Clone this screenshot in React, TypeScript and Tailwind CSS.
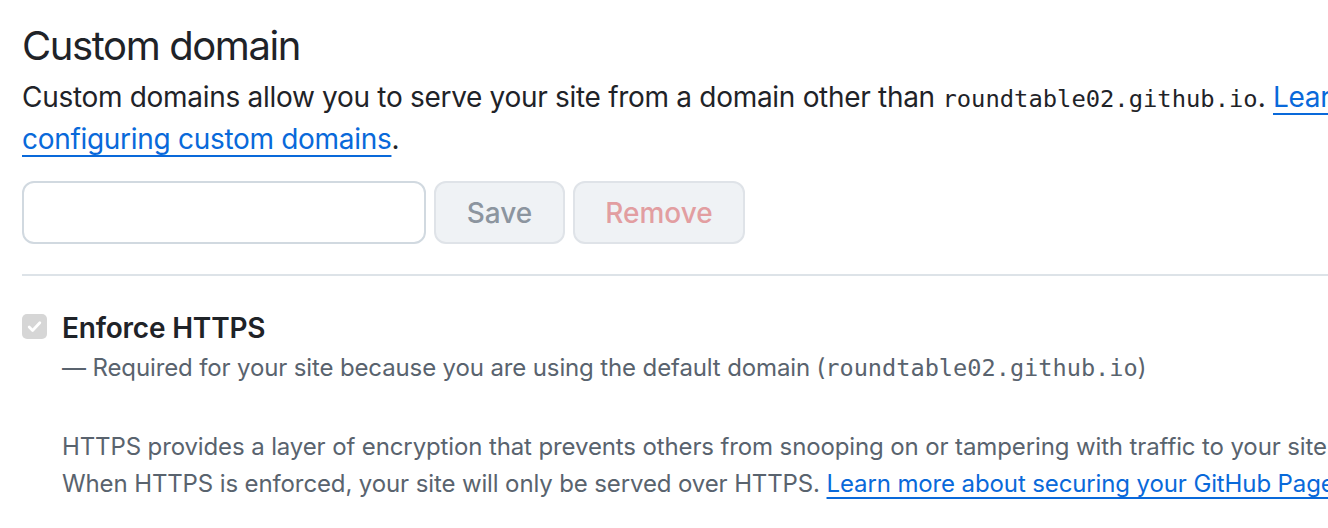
import React from "react";

const sans = { fontFamily: 'Inter, "Liberation Sans", Arial, sans-serif' } as const;

export default function App() {
  return (
    <div
      className="w-[1328px] h-[528px] overflow-hidden bg-white text-[#1f2328] font-['Inter','Liberation_Sans',Arial,sans-serif]"
      style={sans}
    >
      <div className="w-[1600px] pl-[22px] pt-[16px]">
        <h2 className="text-[40px] leading-[60px] font-normal tracking-[-1.4px] text-[#1f2328]">Custom domain</h2>
        <p className="text-[28px] leading-[42px] tracking-[-0.3px] whitespace-nowrap">
          Custom domains allow you to serve your site from a domain other than{" "}
          <code className="font-['DejaVu_Sans_Mono',monospace] text-[23.8px] leading-none tracking-normal">roundtable02.github.io</code>.{" "}
          <a className="text-[#0969da] underline underline-offset-[6px] decoration-2">
            Learn more about
          </a>
          <br />
          <a className="text-[#0969da] underline underline-offset-[6px] decoration-2">
            configuring custom domains
          </a>
          .
        </p>
        <div className="mt-[21px] flex gap-[8px] h-[63px]">
          <input
            type="text"
            className="w-[404px] h-[63px] rounded-[12px] border-2 border-[#d1d9e0] bg-white outline-none"
          />
          <button className="w-[131px] h-[63px] rounded-[12px] border-2 border-[#dfe3e8] bg-[#eff2f5] text-[28px] font-medium text-[#8c959f]">
            Save
          </button>
          <button className="w-[172px] h-[63px] rounded-[12px] border-2 border-[#dfe3e8] bg-[#eff2f5] text-[28px] font-medium text-[#e29ea1]">
            Remove
          </button>
        </div>
        <div className="mt-[30px] h-[2px] bg-[#dde3e8]" />
        <div className="mt-[39px] flex">
          <div className="mt-[-1px] w-[25px] h-[25px] rounded-[5px] bg-[#d6d6d6] flex items-center justify-center shrink-0">
            <svg width="17" height="17" viewBox="0 0 16 16" fill="none">
              <path d="M3 8.5l3.2 3.2L13 4.5" stroke="white" strokeWidth="2.6" strokeLinecap="round" strokeLinejoin="round" />
            </svg>
          </div>
          <div className="ml-[15px]">
            <div className="text-[28px] leading-[28px] font-semibold tracking-[-0.2px] text-[#1f2328] mt-[-1px]">Enforce HTTPS</div>
            <div className="mt-[8px] text-[24px] leading-[36px] tracking-[-0.13px] text-[#59636e] whitespace-nowrap">
              — Required for your site because you are using the default domain (
              <code className="font-['DejaVu_Sans_Mono',monospace] text-[23.6px] leading-none tracking-normal">roundtable02.github.io</code>)
            </div>
            <p className="mt-[42px] text-[24px] leading-[37px] tracking-[-0.12px] text-[#59636e] whitespace-nowrap">
              HTTPS provides a layer of encryption that prevents others from snooping on or tampering with traffic to your site.
              <br />
              When HTTPS is enforced, your site will only be served over HTTPS.{" "}
              <a className="text-[#0969da] underline underline-offset-[5px] decoration-2">
                Learn more about securing your GitHub Pages site with HTTPS
              </a>
              .
            </p>
          </div>
        </div>
      </div>
    </div>
  );
}
